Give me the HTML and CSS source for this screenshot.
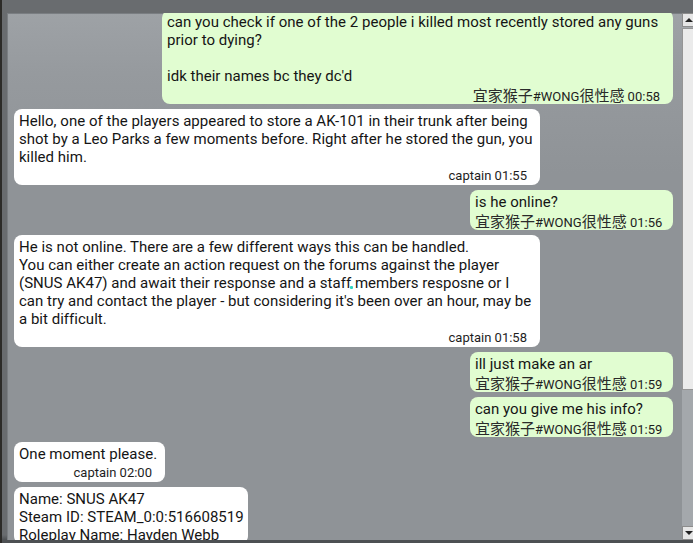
FILE: index.html
```html
<!DOCTYPE html>
<html>
<head>
<meta charset="utf-8">
<link rel="stylesheet" href="styles.css">
</head>
<body>
<div class="window">
  <div class="panel">
    <div class="messages">
      <div class="bubble mine first w-511">
        <div class="text">can you check if one of the 2 people i killed most recently stored any guns<br>prior to dying?<br><br>idk their names bc they dc'd</div>
        <div class="meta"><span class="cjk">宜家猴子</span>#WONG<span class="cjk">很性感</span> 00:58</div>
      </div>
      <div class="bubble theirs w-526">
        <div class="text">Hello, one of the players appeared to store a AK-101 in their trunk after being<br>shot by a Leo Parks a few moments before. Right after he stored the gun, you<br>killed him.</div>
        <div class="meta">captain 01:55</div>
      </div>
      <div class="bubble mine w-203">
        <div class="text">is he online?</div>
        <div class="meta"><span class="cjk">宜家猴子</span>#WONG<span class="cjk">很性感</span> 01:56</div>
      </div>
      <div class="bubble theirs w-526">
        <div class="text">He is not online. There are a few different ways this can be handled.<br>You can either create an action request on the forums against the player<br>(SNUS AK47) and await their response and a staff members resposne or I<br>can try and contact the player - but considering it's been over an hour, may be<br>a bit difficult.</div>
        <div class="meta">captain 01:58</div>
        <span class="cursor"></span>
      </div>
      <div class="bubble mine w-203">
        <div class="text">ill just make an ar</div>
        <div class="meta"><span class="cjk">宜家猴子</span>#WONG<span class="cjk">很性感</span> 01:59</div>
      </div>
      <div class="bubble mine w-203">
        <div class="text">can you give me his info?</div>
        <div class="meta"><span class="cjk">宜家猴子</span>#WONG<span class="cjk">很性感</span> 01:59</div>
      </div>
      <div class="bubble theirs w-151">
        <div class="text">One moment please.</div>
        <div class="meta">captain 02:00</div>
      </div>
      <div class="bubble theirs w-234">
        <div class="text">Name: SNUS AK47<br>Steam ID: STEAM_0:0:516608519<br>Roleplay Name: Hayden Webb</div>
      </div>
    </div>
    <div class="scrollbar">
      <div class="sb-btn up"><span class="tri-up"></span></div>
      <div class="sb-track">
        <div class="sb-thumb"></div>
      </div>
      <div class="sb-btn down"><span class="tri-down"></span></div>
    </div>
  </div>
</div>
</body>
</html>
```

FILE: styles.css
```css
* { box-sizing: border-box; }

html, body {
  margin: 0;
  padding: 0;
  width: 693px;
  height: 543px;
  overflow: hidden;
}

body {
  background: #67696c;
  font-family: Roboto, "Noto Sans", "Liberation Sans", sans-serif;
  color: #151515;
}

.window {
  height: 543px;
  border-left: 2px solid #2c2b28;
  padding: 13px 0 3px 5px;
  background: linear-gradient(to bottom, #696c6f 0, #696c6f 535px, #4d5053 540px, #4d5053 543px);
}

.panel {
  height: 527px;
  display: flex;
  background: linear-gradient(to bottom, #9ea2a6 0, #969a9e 60px, #8f9397 160px, #8f9397 100%);
  box-shadow: inset 1px 1px 0 #7a7e82;
  overflow: hidden;
}

.messages {
  flex: 1;
  display: flex;
  flex-direction: column;
  gap: 5px;
  padding: 0 9px 0 7px;
  overflow: hidden;
}

.bubble {
  position: relative;
  flex: none;
  border-radius: 8px;
  padding: 3px 6px 0 5px;
  font-size: 15px;
  line-height: 18px;
  letter-spacing: 0.02px;
}

.bubble.first { margin-top: -3px; }

.mine {
  align-self: flex-end;
  background: #e1fdd1;
}

.theirs {
  align-self: flex-start;
  background: #ffffff;
}

.w-511 { width: 511px; }
.w-526 { width: 526px; }
.w-203 { width: 203px; }
.w-151 { width: 151px; }
.w-234 { width: 234px; }

.text {
  white-space: nowrap;
}

.meta {
  white-space: nowrap;
  text-align: right;
  padding-right: 7px;
  font-size: 13px;
  letter-spacing: 0;
  line-height: 19px;
  height: 19px;
  color: #1e1e1e;
}

.cjk {
  font-family: "Noto Sans CJK SC", "Noto Sans CJK JP", sans-serif;
  font-size: 15px;
  line-height: 19px;
  color: #2a2a2a;
}

.cursor {
  position: absolute;
  left: 336px;
  top: 51px;
  width: 3px;
  height: 3px;
  background: #2fd6c2;
  border-radius: 1px;
}

.scrollbar {
  width: 11px;
  flex: none;
  display: flex;
  flex-direction: column;
  background: #a4a8ac;
}

.sb-btn {
  height: 14px;
  flex: none;
  background: #e6e6e6;
  border: 1px solid #8c8c8c;
  border-right: none;
  display: flex;
  align-items: center;
  justify-content: flex-start;
  padding-left: 2px;
}

.tri-up {
  width: 0;
  height: 0;
  border-left: 4px solid transparent;
  border-right: 4px solid transparent;
  border-bottom: 4px solid #222;
}

.tri-down {
  width: 0;
  height: 0;
  border-left: 4px solid transparent;
  border-right: 4px solid transparent;
  border-top: 4px solid #222;
}

.sb-track {
  flex: 1;
  padding-top: 1px;
}

.sb-thumb {
  height: 362px;
  background: #ebebeb;
  border: 1px solid #959595;
  border-right: none;
}
```
